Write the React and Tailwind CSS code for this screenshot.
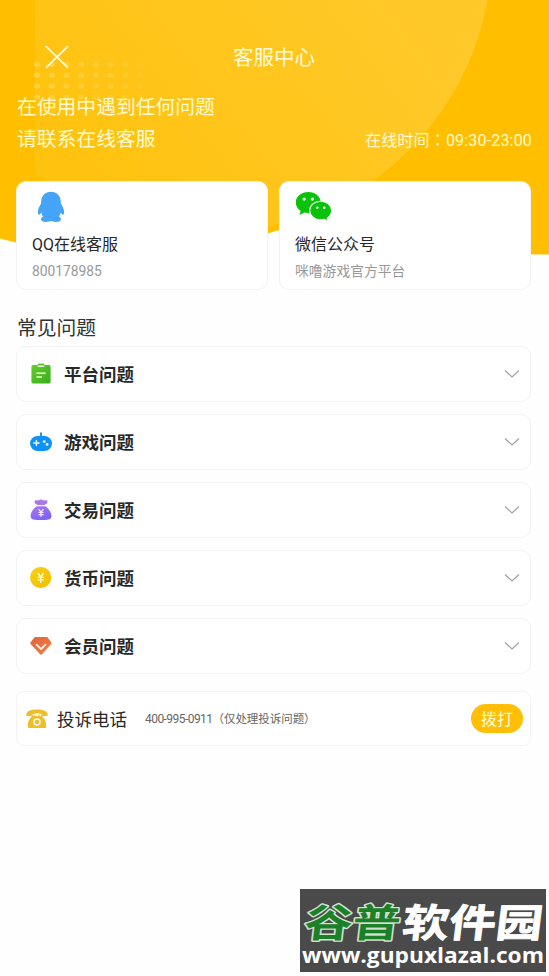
import React, { useState } from 'react';

const CloseIcon = () => (
    <svg width="24" height="24" viewBox="0 0 24 24" fill="none" stroke="#FFFBE0" strokeWidth="1.7" strokeLinecap="round">
        <path d="M1.3 1.6 22.5 22.4M22.5 1.6 1.3 22.4" />
    </svg>
);

const QQIcon = () => (
    <svg width="28" height="32" viewBox="0 0 28 32" fill="#45A3F8">
        <path d="M14 .8C8.400.8 4.300 4.800 4.200 10.600c0 .9.100 1.700-.4 2.500C2.300 15.600.9 18.600.9 21.200c0 1.700.5 2.700 1.200 2.500.700-.1 1.500-1 2.200-2.100.3 1.500.9 2.900 1.800 4.200-1.300.4-2.100 1.400-2.100 2.500 0 1.700 2.100 2.600 5 2.600 2.200 0 4-.3 5-.8 1 .5 2.800.8 5 .8 2.900 0 5-.9 5-2.600 0-1.100-.8-2.100-2.100-2.500.9-1.300 1.500-2.700 1.800-4.200.7 1.100 1.500 2 2.200 2.100.7.200 1.200-.8 1.200-2.500 0-2.600-1.400-5.600-2.900-8.100-.5-.8-.4-1.600-.4-2.500C23.700 4.800 19.600.8 14 .8z" />
    </svg>
);

const WechatIcon = () => (
    <svg width="38" height="32" viewBox="0 0 38 32">
        <path d="M13.300 1C6.400 1 .800 5.600.800 11.500c0 3.400 1.800 6.300 4.800 8.300L4.500 24l5-2.600c1.200.3 2.500.5 3.800.5 6.900 0 12.500-4.700 12.500-10.400S20.200 1 13.300 1z" fill="#0BC20B" />
        <path d="M25.700 10.200c-6.100 0-11 4.100-11 9.300s4.900 9.400 11 9.400c1.300 0 2.500-.2 3.600-.5l4 2.100-1-3.400c2.600-1.700 4.300-4.500 4.300-7.600 0-5.200-4.900-9.300-10.900-9.300z" fill="#0BC20B" stroke="#fff" strokeWidth="1.100" />
        <circle cx="9.200" cy="8.100" r="1.700" fill="#E9FBE9" />
        <circle cx="17.400" cy="8.100" r="1.700" fill="#E9FBE9" />
        <circle cx="22.300" cy="16.800" r="1.300" fill="#E9FBE9" />
        <circle cx="29.300" cy="16.800" r="1.300" fill="#E9FBE9" />
    </svg>
);

const PlatformIcon = () => (
    <svg width="22" height="22" viewBox="0 0 22 22">
        <defs>
            <linearGradient id="platform" x1="0" y1="0" x2="1" y2="1">
                <stop offset="0" stopColor="#66CF31" />
                <stop offset="1" stopColor="#38AD17" />
            </linearGradient>
        </defs>
        <path d="M3 2h4.500a1.500 1.500 0 0 1 1.500-1.400h4A1.500 1.500 0 0 1 14.500 2H19a1.600 1.600 0 0 1 1.600 1.600v15.200A1.600 1.600 0 0 1 19 20.400H3a1.600 1.600 0 0 1-1.600-1.600V3.600A1.600 1.600 0 0 1 3 2z" fill="url(#platform)" />
        <path d="M8.300 3.200h5.400M7 10.200h8M7 13.900h4.300" stroke="#F3FFE8" strokeWidth="1.500" strokeLinecap="round" />
    </svg>
);

const GameIcon = () => (
    <svg width="22" height="22" viewBox="0 0 22 22">
        <path d="M11 2.200v5" stroke="#0E8CF5" strokeWidth="1.800" strokeLinecap="round" />
        <rect x="0" y="5" width="22" height="15" rx="7.500" fill="#0E92F7" />
        <path d="M6.400 9.400v5.200M3.800 12h5.200" stroke="#E8F6FF" strokeWidth="1.500" strokeLinecap="round" />
        <circle cx="14.200" cy="10.600" r="1.400" fill="#E8F6FF" />
        <circle cx="17.100" cy="13.400" r="1.400" fill="#E8F6FF" />
    </svg>
);

const TradeIcon = () => (
    <svg width="22" height="22" viewBox="0 0 22 22">
        <defs>
            <linearGradient id="trade" x1="0" y1="0" x2="0.600" y2="1">
                <stop offset="0" stopColor="#AC78F2" />
                <stop offset="1" stopColor="#7B61F8" />
            </linearGradient>
        </defs>
        <path d="M6.700 5.500C4.700 4.600 4 2.800 4.900 1.800c1.100-1 2.700.1 3.700-.6C9.700.2 12.300.2 13.400 1.200c1 .7 2.600-.4 3.700.6.9 1 .2 2.800-1.800 3.700L14.200 6H7.800z" fill="#AA78E6" />
        <path d="M6.700 7.200h8.600c3.100 2 6.100 6 6.100 9.500 0 2.100-.9 3.400-2.600 3.800-4.500.8-11.100.8-15.600 0C1.500 20.100.6 18.800.6 16.700c0-3.500 3-7.500 6.100-9.500z" fill="url(#trade)" />
        <path d="M8.600 10.200 11 13.200l2.400-3M11 13.200v4.500M8.500 13.500h5M8.500 15.600h5" stroke="#F4EEFF" strokeWidth="1.200" fill="none" />
    </svg>
);

const CoinIcon = () => (
    <svg width="22" height="22" viewBox="0 0 22 22">
        <defs>
            <linearGradient id="coin" x1="0" y1="0" x2="1" y2="1">
                <stop offset="0" stopColor="#F8D111" />
                <stop offset="1" stopColor="#F0BD02" />
            </linearGradient>
        </defs>
        <circle cx="10.700" cy="10.600" r="10.600" fill="url(#coin)" />
        <path d="m7.700 5.800 3 4.200 3-4.200M10.700 10v6M7.700 10.400h6M7.700 12.900h6" stroke="#FFFBE0" strokeWidth="1.400" fill="none" />
    </svg>
);

const MemberIcon = () => (
    <svg width="22" height="22" viewBox="0 0 22 22">
        <defs>
            <linearGradient id="member" x1="0" y1="0" x2="1" y2="1">
                <stop offset="0" stopColor="#E2623B" />
                <stop offset="1" stopColor="#F08142" />
            </linearGradient>
        </defs>
        <path d="M5.200 2h11.600q.5 0 .9.500l3.600 5q.5.700-.1 1.400L11.700 19.500q-.7.700-1.400 0L.6 8.900Q0 8.200.5 7.500l3.800-5q.4-.5.900-.5z" fill="url(#member)" />
        <path d="m6.500 9.600 4.500 4.400 4.500-4.400" stroke="#FFEFE8" strokeWidth="1.800" fill="none" strokeLinecap="round" strokeLinejoin="round" />
    </svg>
);

const PhoneIcon = () => (
    <svg width="22" height="20" viewBox="0 0 22 20" fill="#EFBE2B">
        <path d="M.3 5.800C.3 2.300 4.500.6 11 .6s10.700 1.700 10.700 5.200v.4c0 .6-.4.900-1.100.9h-3.300c-.7 0-1.100-.3-1.100-.9v-.9c-2.800-1-7.600-1-10.400 0v.9c0 .6-.4.900-1.100.9H1.400c-.7 0-1.100-.3-1.100-.9z" />
        <path d="M7.100 5.600v1.300h1.300V5.600h1.200v1.300h2.800V5.600h1.200v1.300h1.300V5.600h1.300l.4 2.300c2.200 1.700 3.500 4.400 3.500 7.500v2.300c0 .8-.5 1.300-1.300 1.300H3.200c-.8 0-1.300-.5-1.300-1.300v-2.300c0-3.100 1.300-5.800 3.500-7.500l.4-2.300z" />
        <circle cx="11" cy="13" r="3" fill="none" stroke="#FFFBEA" strokeWidth="1.500" />
    </svg>
);

const Chevron = () => (
    <svg width="16" height="10" viewBox="0 0 16 10" fill="none" stroke="#A0A0A0" strokeWidth="1.200">
        <path d="m1 1.500 7 6.500 7-6.500" />
    </svg>
);

const dotColumns = [37, 51.8, 66.5, 81.2, 96, 110.700, 125.400, 140];
const dotRows = [64.300, 75.200, 86, 97];

const HeaderBackground = () => (
    <svg className="absolute top-0 left-0" width="549" height="260" viewBox="0 0 549 260">
        <defs>
            <linearGradient id="glow" gradientUnits="userSpaceOnUse" x1="90" y1="220" x2="400" y2="-20">
                <stop offset="0" stopColor="#FFC20E" />
                <stop offset="1" stopColor="#FFC92A" />
            </linearGradient>
            <clipPath id="wave">
                <path d="M0 238.500C50 252 100 256 150 256C200 256 230 246 268 233.500C300 221 350 228 400 240C450 250 490 254 549 254.500V0H0z" />
            </clipPath>
        </defs>
        <g clipPath="url(#wave)">
            <rect width="549" height="260" fill="#FFBF00" />
            <path d="M35 0H487.500A283 283 0 0 1 209 233A283 283 0 0 1 35 173z" fill="url(#glow)" />
            {dotRows.map((y) =>
                dotColumns.map((x, i) => (
                    <ellipse key={`${x}-${y}`} cx={x} cy={y} rx="3" ry="2.600" fill="#FFE27A" opacity={0.48 - i * 0.046} />
                ))
            )}
        </g>
    </svg>
);

const questions = [
    { name: '平台问题', icon: PlatformIcon },
    { name: '游戏问题', icon: GameIcon },
    { name: '交易问题', icon: TradeIcon },
    { name: '货币问题', icon: CoinIcon },
    { name: '会员问题', icon: MemberIcon },
];

const ContactCard = ({ icon, title, text }) => (
    <div className="flex-1 h-[109px] bg-white rounded-[10px] border border-[#f3f3f3] pl-[15px] pt-[9px]">
        <div className="h-8">{icon}</div>
        <div className="mt-[10px] text-[16px] leading-6 text-[#282828]">{title}</div>
        <div className="mt-[4px] text-[13.800px] leading-5 text-[#999]">{text}</div>
    </div>
);

const Watermark = () => (
    <div className="absolute left-[300px] top-[889px] w-[246px] h-[83px] bg-[#4a4a4a] overflow-hidden">
        <svg width="246" height="83" viewBox="0 0 246 83">
            <g className="font-['Noto_Sans_CJK_SC',sans-serif] font-bold" fontSize="39" transform="translate(6 0) skewX(-7)" strokeLinejoin="round">
                <text x="3" y="48" fill="#1B8027" stroke="#D0E2D0" strokeWidth="2.800" paintOrder="stroke" textLength="96" lengthAdjust="spacingAndGlyphs">谷普</text>
                <text x="101" y="48" fill="#fff" stroke="#fff" strokeWidth="0.800" textLength="140" lengthAdjust="spacingAndGlyphs">软件园</text>
            </g>
            <text x="2" y="74" fontSize="21.500" fill="#fff" className="font-['Open_Sans',sans-serif] font-bold" textLength="242" lengthAdjust="spacingAndGlyphs">www.gupuxlazal.com</text>
        </svg>
    </div>
);

const App = () => {
    const [open, setOpen] = useState(null);

    return (
        <div className="relative w-[549px] h-[976px] bg-[#fefefe] overflow-hidden font-['Roboto','Noto_Sans_CJK_SC',sans-serif]">
            <HeaderBackground />

            <div className="relative pl-4 pr-[18px]">
                {/* Header */}
                <header className="grid grid-cols-[1fr_auto_1fr] items-center pt-[43px] pl-px h-[73px] text-[#FFFBD9]">
                    <button className="w-6 ml-[28px] mb-[2px]"><CloseIcon /></button>
                    <h1 className="text-[20.500px] leading-[30px]">客服中心</h1>
                </header>

                <div className="pt-[19px] pl-px text-[19.800px] leading-8 text-[#FFFBCF]">
                    <p>在使用中遇到任何问题</p>
                    <div className="flex items-center justify-between h-8">
                        <p>请联系在线客服</p>
                        <p className="-mr-px text-[16px] tracking-[0.180px]">在线时间<span className="font-['Noto_Sans_CJK_TC',sans-serif]">：</span>09:30-23:00</p>
                    </div>
                </div>

                {/* Contact cards */}
                <div className="flex gap-[11px] mt-[25px]">
                    <ContactCard icon={<div className="ml-[5px]"><QQIcon /></div>} title="QQ在线客服" text="800178985" />
                    <ContactCard icon={<WechatIcon />} title="微信公众号" text="咪噜游戏官方平台" />
                </div>

                {/* Questions */}
                <h2 className="mt-[24px] pl-px text-[19.800px] leading-[30px] text-[#333]">常见问题</h2>
                <div className="flex flex-col gap-3 mt-[2px]">
                    {questions.map(({ name, icon: Icon }, i) => (
                        <button
                            key={name}
                            onClick={() => setOpen(open === i ? null : i)}
                            className="flex items-center h-14 rounded-[10px] border border-[#f3f3f3] bg-white pl-[13px] pr-[10px]"
                        >
                            <Icon />
                            <span className="ml-[12px] mt-[2px] text-[17.500px] font-bold text-[#282828]">{name}</span>
                            <span className="ml-auto"><Chevron /></span>
                        </button>
                    ))}
                </div>

                {/* Complaint phone */}
                <div className="flex items-center h-[55px] mt-[17px] rounded-lg border border-[#f3f3f3] bg-white pl-[9px] pr-[7px]">
                    <PhoneIcon />
                    <span className="ml-[9px] mt-[3px] text-[17.500px] text-[#282828]">投诉电话</span>
                    <span className="ml-[18px] mt-[2px] text-[11.500px] tracking-[-0.050px] text-[#666]">
                        <span className="text-[12px] tracking-[-0.550px]">400-995-0911</span>（仅处理投诉问题）
                    </span>
                    <button className="ml-auto w-[52px] h-[29px] rounded-full bg-[#FFBF06] text-[16px] leading-[31px] text-[#FFFBD9]">拨打</button>
                </div>
            </div>

            <Watermark />
        </div>
    );
};

export default App;
